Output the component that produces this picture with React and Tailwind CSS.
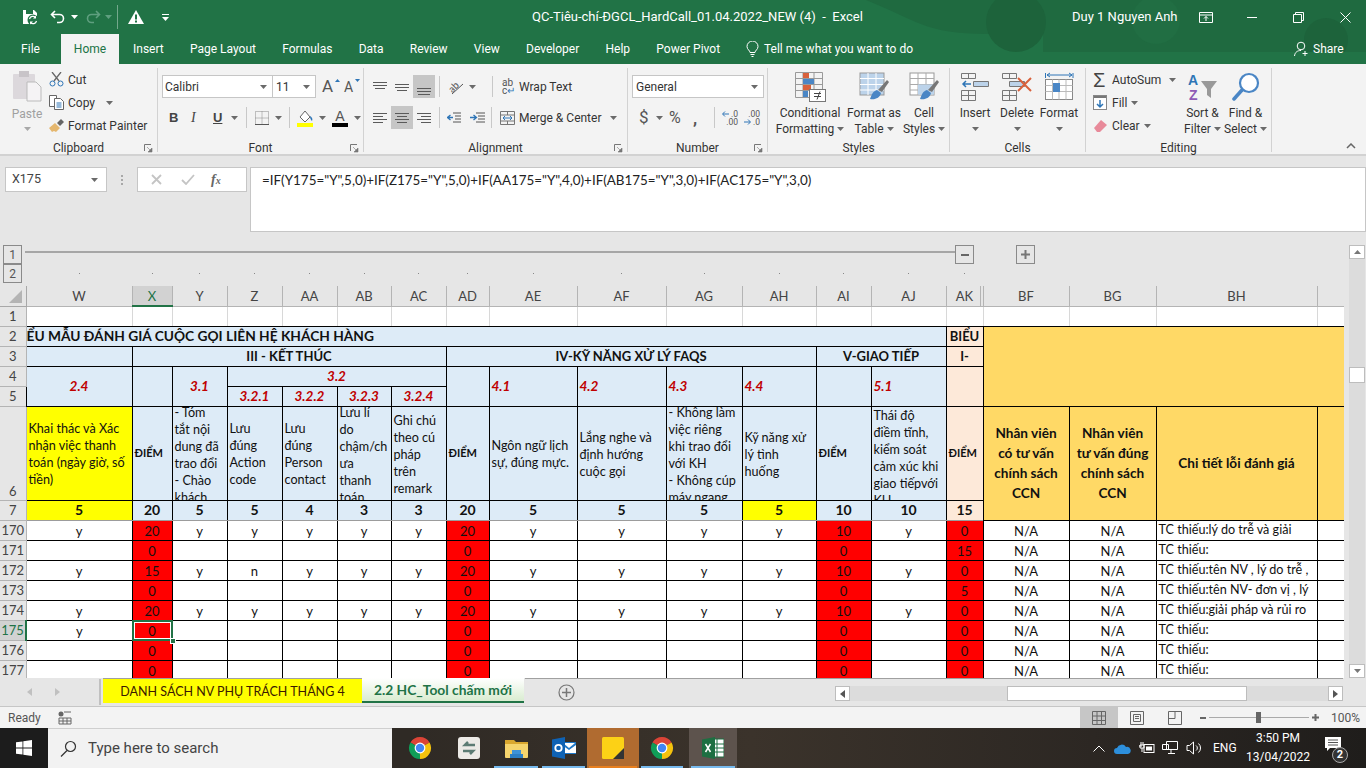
import React from "react";

const COLS = [
  { n: "W", w: "w-[106px]" }, { n: "X", w: "w-[40px]" }, { n: "Y", w: "w-[55px]" }, { n: "Z", w: "w-[55px]" },
  { n: "AA", w: "w-[55px]" }, { n: "AB", w: "w-[54px]" }, { n: "AC", w: "w-[55px]" }, { n: "AD", w: "w-[43px]" },
  { n: "AE", w: "w-[88px]" }, { n: "AF", w: "w-[89px]" }, { n: "AG", w: "w-[76px]" }, { n: "AH", w: "w-[74px]" },
  { n: "AI", w: "w-[55px]" }, { n: "AJ", w: "w-[75px]" }, { n: "AK", w: "w-[37px]" }, { n: "BF", w: "w-[86px]" },
  { n: "BG", w: "w-[87px]" }, { n: "BH", w: "w-[161px]" }, { n: "", w: "w-[27px]" },
];

const ROWS = [
  ["170", "y", "20", "y", "y", "y", "y", "y", "20", "y", "y", "y", "y", "10", "y", "0", "N/A", "N/A", "TC thiếu:lý do trễ và giải"],
  ["171", "", "0", "", "", "", "", "", "0", "", "", "", "", "0", "", "15", "N/A", "N/A", "TC thiếu:"],
  ["172", "y", "15", "y", "n", "y", "y", "y", "20", "y", "y", "y", "y", "10", "y", "0", "N/A", "N/A", "TC thiếu:tên NV , lý do trễ ,"],
  ["173", "", "0", "", "", "", "", "", "0", "", "", "", "", "0", "", "5", "N/A", "N/A", "TC thiếu:tên NV- đơn vị , lý"],
  ["174", "y", "20", "y", "y", "y", "y", "y", "20", "y", "y", "y", "y", "10", "y", "0", "N/A", "N/A", "TC thiếu:giải pháp và rủi ro"],
  ["175", "y", "0", "", "", "", "", "", "0", "", "", "", "", "0", "", "0", "N/A", "N/A", "TC thiếu:"],
  ["176", "", "0", "", "", "", "", "", "0", "", "", "", "", "0", "", "0", "N/A", "N/A", "TC thiếu:"],
  ["177", "", "0", "", "", "", "", "", "0", "", "", "", "", "0", "", "0", "N/A", "N/A", "TC thiếu:"],
];

const Caret = ({ className = "", color = "#6a6a6a" }) => (
  <svg width="7" height="4" viewBox="0 0 7 4" className={"shrink-0 " + className}><path d="M0 0h7L3.5 4z" fill={color} /></svg>
);

const Lines = ({ d, w = 16, h = 16, color = "#5a5a5a" }) => (
  <svg width={w} height={h} viewBox={`0 0 ${w} ${h}`} className="shrink-0">
    {d.map(([a, b, y], i) => <rect key={i} x={a} y={y} width={b - a} height="1" fill={color} />)}
  </svg>
);

const Launcher = () => (
  <svg width="9" height="9" viewBox="0 0 9 9" className="absolute right-[4px] top-[4px]">
    <path d="M.5 7V.5H7" fill="none" stroke="#777" /><path d="M3 3l4 4M8 4v4H4z" fill="#777" stroke="#777" strokeWidth=".6" />
  </svg>
);

function Group({ className, label, launcher, children }) {
  return (
    <div className={"h-[84px] shrink-0 border-r border-[#d2d2d2] " + className}>
      <div className="h-[72px] flex flex-col">{children}</div>
      <div className="relative h-[16px] leading-[16px] text-center text-[#333]">
        {label}
        {launcher && <Launcher />}
      </div>
    </div>
  );
}

const BigBtn = ({ w, icon, l1, l2, caretOnly }) => (
  <div className={"flex flex-col items-center shrink-0 " + w}>
    <div className="h-[38px] flex items-center justify-center">{icon}</div>
    <div className="leading-[16px] mt-[-1px] whitespace-nowrap">{l1}</div>
    {caretOnly ? <Caret className="mt-[6px]" /> : (
      <div className="leading-[16px] flex items-center gap-[3px] whitespace-nowrap">{l2}<Caret /></div>
    )}
  </div>
);

const Sep = ({ className = "" }) => <div className={"w-px h-[21px] bg-[#c8c8c8] shrink-0 " + className} />;

const Chrome = () => (
  <svg width="24" height="24" viewBox="0 0 24 24">
    <path d="M12 12L2.47 6.5A11 11 0 0 1 21.53 6.5Z" fill="#db4437" />
    <path d="M12 12L21.53 6.5A11 11 0 0 1 12 23Z" fill="#f4c20d" />
    <path d="M12 12L12 23A11 11 0 0 1 2.47 6.5Z" fill="#0f9d58" />
    <circle cx="12" cy="12" r="5.4" fill="#fff" /><circle cx="12" cy="12" r="4.2" fill="#4285f4" />
  </svg>
);

const Slot = ({ className = "", bar = "", children }) => (
  <div className={"relative h-full flex items-center justify-center shrink-0 " + className}>
    {children}
    {bar && <div className={"absolute bottom-0 left-[2px] right-[2px] h-[2px] " + bar} />}
  </div>
);

function TitleBar() {
  return (
    <div className="h-[34px] flex items-center text-white shrink-0">
      <svg width="18" height="18" viewBox="0 0 18 18" className="ml-[21px]">
        <path d="M2 2h11l3 3v11H2z" fill="#fff" /><rect x="5" y="2" width="7" height="4" fill="#217346" /><circle cx="12" cy="12" r="5.5" fill="#217346" />
        <path d="M8.5 11a3.5 3.5 0 0 1 6-1.5M15.5 13a3.5 3.5 0 0 1-6 1.5" fill="none" stroke="#fff" strokeWidth="1.2" />
        <path d="M15 7.5v3h-3zM9 16.500v-3h3z" fill="#fff" />
      </svg>
      <svg width="16" height="14" viewBox="0 0 16 14" className="ml-[11px]"><path d="M5 1L1.500 4.500 5 8M2 4.500h7.500a4 4 0 0 1 0 8H7" fill="none" stroke="#fff" strokeWidth="1.6" /></svg>
      <Caret color="#fff" className="ml-[5px]" />
      <svg width="16" height="14" viewBox="0 0 16 14" className="ml-[7px]"><path d="M11 1l3.500 3.500L11 8M14 4.500H6.500a4 4 0 0 0 0 8H9" fill="none" stroke="#5f9f7f" strokeWidth="1.6" /></svg>
      <Caret color="#5f9f7f" className="ml-[4px]" />
      <div className="w-px h-[24px] bg-[#74a88c] ml-[5px]" />
      <svg width="16" height="14" viewBox="0 0 16 14" className="ml-[10px]"><path d="M8 0l8 14H0z" fill="#fff" /><rect x="7" y="4.500" width="2" height="5" fill="#217346" /><rect x="7" y="10.500" width="2" height="2" fill="#217346" /></svg>
      <svg width="7" height="7" viewBox="0 0 7 7" className="ml-[18px]"><rect y="0" width="7" height="1" fill="#fff" /><path d="M0 3h7L3.500 7z" fill="#fff" /></svg>
      <div className="ml-[363px] w-[310px] text-[13px] whitespace-pre">QC-Tiêu-chí-ĐGCL_HardCall_01.04.2022_NEW (4)  -  Excel</div>
      <div className="ml-[230px] w-[111px] text-[13px] whitespace-nowrap z-10">Duy 1 Nguyen Anh</div>
      <svg width="14" height="11" viewBox="0 0 14 11" className="ml-[16px] z-10"><path d="M.5.500h13v10H.5zM.5 3h13M7 9V4.500M5 6.500l2-2 2 2" fill="none" stroke="#fff" /></svg>
      <div className="w-[10px] h-px bg-white ml-[34px] z-10" />
      <svg width="11" height="11" viewBox="0 0 11 11" className="ml-[36px] z-10"><path d="M.5 2.500h8v8h-8zM2.500 2.500v-2h8v8h-2" fill="none" stroke="#fff" /></svg>
      <svg width="11" height="11" viewBox="0 0 11 11" className="ml-[36px] z-10"><path d="M.5.500l10 10M10.500.500l-10 10" stroke="#fff" /></svg>
    </div>
  );
}

function TabRow() {
  const tabs = ["Insert", "Page Layout", "Formulas", "Data", "Review", "View", "Developer", "Help", "Power Pivot"];
  return (
    <div className="h-[30px] flex items-end text-white text-[12px] shrink-0">
      <div className="w-[61px] h-[30px] leading-[30px] text-center">File</div>
      <div className="w-[58px] h-[30px] leading-[30px] text-center bg-[#f3f3f3] text-[#217346]">Home</div>
      <div className="flex gap-[26.250px] ml-[14px] h-[30px] leading-[30px] w-[587px]">
        {tabs.map((t) => <div key={t} className="whitespace-nowrap">{t}</div>)}
      </div>
      <div className="h-[30px] flex items-center ml-[26px]">
        <svg width="13" height="16" viewBox="0 0 13 16"><path d="M4 11.500c0-2-3-3-3-6a5.500 5.500 0 0 1 11 0c0 3-3 4-3 6zM4.500 13.500h4M5.500 15.500h2" fill="none" stroke="#fff" /></svg>
        <span className="ml-[5px] w-[150px] whitespace-nowrap">Tell me what you want to do</span>
      </div>
      <div className="h-[30px] flex items-center ml-[380px] z-10 whitespace-nowrap">
        <svg width="15" height="16" viewBox="0 0 15 16"><circle cx="7" cy="5" r="3.800" fill="none" stroke="#fff" /><path d="M.5 15c.5-4 3-5.500 6.500-5.500M11 10v5M8.500 12.500h5" fill="none" stroke="#fff" /></svg>
        <span className="ml-[4px]">Share</span>
      </div>
    </div>
  );
}

const CondFormat = () => (
  <svg width="31" height="30" viewBox="0 0 31 30">
    <path d="M.5.500h27v25H.5zM8 .5v25M19 .5v25M.5 6.500h27M.5 12.500h27M.5 18.500h27" fill="none" stroke="#999" />
    <rect x="8" y="1" width="6" height="5" fill="#d8613c" /><rect x="8" y="7" width="11" height="5" fill="#4a86c5" /><rect x="8" y="13" width="8" height="5" fill="#d8613c" /><rect x="8" y="19" width="5" height="6" fill="#4a86c5" />
    <rect x="14.500" y="17.500" width="16" height="12" fill="#fff" stroke="#777" /><path d="M19 21.500h7M19 24.500h7M25 19.500l-3 8" stroke="#444" fill="none" />
  </svg>
);
const FormatTable = ({ cell }) => (
  <svg width="31" height="30" viewBox="0 0 31 30">
    <rect x="1" y="1" width="24" height="22" fill={cell ? "#fff" : "#bcd3ea"} stroke="#999" />
    <path d="M1 6.500h24M1 12.500h24M1 18h24M9 1v22M17 1v22" stroke={cell ? "#aaa" : "#fff"} fill="none" />
    {cell && <rect x="9" y="12.500" width="16" height="10" fill="#bcd3ea" />}
    <path d="M28 8l2 2-7 10-4-2z" fill="#777" /><path d="M18 18c-4 1-5 4-7 9 5 1 10-1 11-6z" fill="#4a86c5" />
  </svg>
);
const InsertIco = () => (
  <svg width="28" height="28" viewBox="0 0 28 28">
    <path d="M.5.500h14v5H.5zM7.500.5v5M.5 17.500h14v10H.5zM.5 22.500h14M7.500 17.500v10M12.500 8.500h15v5h-15zM20 8.500v5" fill="none" stroke="#777" />
    <rect x="13" y="9" width="14" height="4" fill="#bcd3ea" /><path d="M10 11H2M5 8l-3 3 3 3" fill="none" stroke="#2e75b6" strokeWidth="1.500" />
  </svg>
);
const DeleteIco = () => (
  <svg width="31" height="28" viewBox="0 0 31 28">
    <path d="M.5.500h14v5H.5zM7.500.5v5M.5 17.500h14v10H.5zM.5 22.500h14M7.500 17.500v10M7.500 8.500h15v5h-15z" fill="none" stroke="#777" />
    <rect x="8" y="9" width="14" height="4" fill="#bcd3ea" /><path d="M16 5l13 13M29 5L16 18" stroke="#d8613c" strokeWidth="2" />
  </svg>
);
const FormatIco = () => (
  <svg width="29" height="30" viewBox="0 0 29 30">
    <path d="M.5 1v5M28 1v5M2 3h25M2 3l3-2M2 3l3 2M27 3l-3-2M27 3l-3 2" fill="none" stroke="#2e75b6" />
    <rect x=".5" y="7.500" width="27" height="20" fill="#fff" stroke="#888" /><path d="M.5 13.500h27M.5 19.500h27M7.500 7.500v20M14 7.500v20M21 7.500v20" stroke="#bbb" />
    <rect x="8" y="11" width="7" height="9" fill="#4a86c5" />
  </svg>
);

function Ribbon() {
  return (
    <div className="h-[92px] bg-[#f3f3f3] border-b-2 border-[#d2d2d2] pt-[4px] flex text-[12px] text-[#333] shrink-0">
      <Group className="w-[158px]" label="Clipboard" launcher>
        <div className="flex h-full">
          <div className="ml-[11px] w-[32px] flex flex-col items-center">
            <svg width="30" height="31" viewBox="0 0 30 31" className="mt-[3px]">
              <rect x="1" y="3" width="22" height="25" rx="1" fill="#dcd8dc" /><rect x="7" y="0" width="10" height="6" fill="#c8c4c8" />
              <path d="M15 11h9l5 5v14H15z" fill="#f5f3f5" stroke="#bbb" />
            </svg>
            <div className="mt-[4px] text-[#a0a0a0] leading-[16px]">Paste</div>
            <Caret className="mt-[5px]" color="#a8a8a8" />
          </div>
          <div className="ml-[6px] flex flex-col">
            <div className="h-[23px] flex items-center">
              <svg width="15" height="15" viewBox="0 0 15 15"><path d="M3 0l7 9M12 0L5 9" stroke="#666" strokeWidth="1.300" /><circle cx="3.500" cy="11.500" r="2.500" fill="none" stroke="#2e75b6" /><circle cx="11.500" cy="11.500" r="2.500" fill="none" stroke="#2e75b6" /></svg>
              <span className="ml-[4px]">Cut</span>
            </div>
            <div className="h-[23px] flex items-center">
              <svg width="15" height="15" viewBox="0 0 15 15"><path d="M.5.500h7v11h-7z" fill="#fff" stroke="#666" /><path d="M5.500 3.500h6l3 3v8h-9z" fill="#fff" stroke="#666" /><path d="M7.500 8h5M7.500 10h5M7.500 12h5" stroke="#2e75b6" /></svg>
              <span className="ml-[4px]">Copy</span><Caret className="ml-[11px]" />
            </div>
            <div className="h-[23px] flex items-center">
              <svg width="16" height="15" viewBox="0 0 16 15"><path d="M0 10l6-5 5 5-4 4-2-1-2 1z" fill="#e5b76e" /><path d="M8 5l4-4 3 3-4 4z" fill="#666" /></svg>
              <span className="ml-[3px] whitespace-nowrap">Format Painter</span>
            </div>
          </div>
        </div>
      </Group>

      <Group className="w-[206px]" label="Font" launcher>
        <div className="flex mt-[7px] ml-[4px] h-[23px]">
          <div className="w-[111px] bg-white border border-[#c6c6c6] flex items-center justify-between pl-[2px] pr-[5px]"><span>Calibri</span><Caret /></div>
          <div className="w-[43px] bg-white border border-l-0 border-[#c6c6c6] flex items-center justify-between pl-[3px] pr-[5px]"><span>11</span><Caret /></div>
          <div className="ml-[6px] text-[17px] leading-[23px] text-[#555] relative w-[16px]">A<svg width="5" height="3" className="absolute right-[-2px] top-[4px]"><path d="M0 3h5L2.500 0z" fill="#2e75b6" /></svg></div>
          <div className="ml-[6px] text-[14px] leading-[24px] text-[#555] relative w-[14px]">A<svg width="5" height="3" className="absolute right-[-2px] top-[4px]"><path d="M0 0h5L2.500 3z" fill="#2e75b6" /></svg></div>
        </div>
        <div className="flex items-center mt-[8px] h-[23px] font-[Liberation_Serif,serif]">
          <span className="ml-[11px] w-[12px] font-bold text-[13px] font-[Liberation_Sans,sans-serif] text-[#444]">B</span>
          <span className="ml-[10px] w-[12px] italic text-[14px] text-[#444]">I</span>
          <span className="ml-[10px] w-[11px] underline font-bold text-[13px] font-[Liberation_Sans,sans-serif] text-[#444]">U</span>
          <Caret className="ml-[7px]" />
          <Sep className="ml-[8px]" />
          <svg width="14" height="14" viewBox="0 0 14 14" className="ml-[8px]"><path d="M.5.500h13v13H.5zM7 .5v13M.5 7h13" fill="none" stroke="#888" strokeDasharray="1 1" /><path d="M0 13.500h14" stroke="#555" /></svg>
          <Caret className="ml-[6px]" />
          <Sep className="ml-[7px]" />
          <svg width="17" height="18" viewBox="0 0 17 18" className="ml-[7px]"><path d="M3 8l5-6 5 6-5 5z" fill="#fff" stroke="#666" /><path d="M13 7c2 1 3 3 2 5-1-1-2-2-2-5z" fill="#2e75b6" /><rect y="14" width="16" height="4" fill="#ffff00" /></svg>
          <Caret className="ml-[5px]" />
          <div className="ml-[6px] w-[16px] h-[18px] flex flex-col items-center justify-end">
            <span className="text-[14px] leading-[13px] font-[Liberation_Sans,sans-serif] text-[#555]">A</span>
            <div className="w-[16px] h-[4px] bg-black" />
          </div>
          <Caret className="ml-[6px]" />
        </div>
      </Group>

      <Group className="w-[264px]" label="Alignment" launcher>
        <div className="flex items-center mt-[7px] h-[23px] pl-[9px]">
          <Lines d={[[0, 14, 3], [0, 14, 6], [2, 12, 9]]} />
          <div className="ml-[6px]"><Lines d={[[0, 14, 5], [0, 14, 8], [2, 12, 11]]} /></div>
          <div className="ml-[2px] w-[22px] h-[23px] bg-[#c6c6c6] flex items-center justify-center"><Lines d={[[1, 15, 9], [1, 15, 12], [2, 14, 15]]} /></div>
          <Sep className="ml-[4px]" />
          <svg width="17" height="17" viewBox="0 0 17 17" className="ml-[7px]"><text x="1" y="13" fontSize="10" fill="#555" transform="rotate(-45 6 9)" fontFamily="Lato">ab</text><path d="M5 16L16 6" stroke="#555" /></svg>
          <Caret className="ml-[5px]" />
          <Sep className="ml-[16px]" />
          <span className="ml-[9px] text-[10px] leading-[8px] text-[#555] w-[14px]">ab<br />c<span className="text-[#2e75b6]">↵</span></span>
          <span className="ml-[3px]">Wrap Text</span>
        </div>
        <div className="flex items-center mt-[8px] h-[23px] pl-[9px]">
          <Lines d={[[0, 14, 3], [0, 10, 6], [0, 14, 9], [0, 10, 12]]} />
          <div className="ml-[2px] w-[22px] h-[23px] bg-[#c6c6c6] flex items-center justify-center"><Lines d={[[1, 15, 3], [3, 13, 6], [1, 15, 9], [3, 13, 12]]} /></div>
          <div className="ml-[4px]"><Lines d={[[0, 14, 3], [4, 14, 6], [0, 14, 9], [4, 14, 12]]} /></div>
          <Sep className="ml-[6px]" />
          <svg width="14" height="14" viewBox="0 0 14 14" className="ml-[7px]"><path d="M6 2h8M8 5h6M8 8h6M6 11h8" stroke="#555" /><path d="M6 6.500H1M3.500 4l-3 2.500 3 2.500" fill="none" stroke="#2e75b6" strokeWidth="1.300" /></svg>
          <svg width="16" height="14" viewBox="0 0 16 14" className="ml-[8px]"><path d="M7 2h9M9 5h7M9 8h7M7 11h9" stroke="#555" /><path d="M1 6.500h6M4.500 4l3 2.500-3 2.500" fill="none" stroke="#2e75b6" strokeWidth="1.300" /></svg>
          <Sep className="ml-[6px]" />
          <svg width="15" height="14" viewBox="0 0 15 14" className="ml-[8px]"><path d="M.5.500h14v13H.5zM.5 4h14M.5 10h14M7.500.5V4M7.500 10v3.500" fill="none" stroke="#777" /><path d="M3 7h9M5 5L3 7l2 2M10 5l2 2-2 2" fill="none" stroke="#2e75b6" /></svg>
          <span className="ml-[4px] whitespace-nowrap">Merge &amp; Center</span>
          <Caret className="ml-[9px]" />
        </div>
      </Group>

      <Group className="w-[140px]" label="Number" launcher>
        <div className="mt-[7px] ml-[4px] w-[132px] h-[23px] bg-white border border-[#c6c6c6] flex items-center justify-between pl-[3px] pr-[5px]"><span>General</span><Caret /></div>
        <div className="flex items-center mt-[8px] h-[23px] text-[#555]">
          <span className="ml-[11px] text-[17px] w-[10px]">$</span>
          <Caret className="ml-[7px]" />
          <span className="ml-[6px] text-[16px] w-[15px]">%</span>
          <span className="ml-[9px] text-[17px] font-bold w-[5px] leading-[18px]">,</span>
          <Sep className="ml-[16px]" />
          <div className="ml-[7px] w-[16px] text-[8.500px] leading-[8px]">
            <div className="flex items-center justify-between">
              <svg width="7" height="6" viewBox="0 0 7 6"><path d="M7 3H1M3 .5L.5 3 3 5.500" fill="none" stroke="#2e75b6" /></svg>
              <span>.0</span>
            </div>
            <div className="text-right">.00</div>
          </div>
          <div className="ml-[6px] w-[16px] text-[8.500px] leading-[8px]">
            <div className="text-right">.00</div>
            <div className="flex items-center justify-between">
              <svg width="7" height="6" viewBox="0 0 7 6"><path d="M0 3h6M4 .5L6.500 3 4 5.500" fill="none" stroke="#2e75b6" /></svg>
              <span>.0</span>
            </div>
          </div>
        </div>
      </Group>

      <Group className="w-[182px]" label="Styles">
        <div className="flex pl-[9px]">
          <BigBtn w="w-[66px]" icon={<CondFormat />} l1="Conditional" l2="Formatting" />
          <BigBtn w="w-[62px]" icon={<FormatTable />} l1="Format as" l2="Table" />
          <BigBtn w="w-[38px]" icon={<FormatTable cell />} l1="Cell" l2="Styles" />
        </div>
      </Group>

      <Group className="w-[136px]" label="Cells">
        <div className="flex pl-[4px]">
          <BigBtn w="w-[42px]" icon={<InsertIco />} l1="Insert" caretOnly />
          <BigBtn w="w-[42px]" icon={<DeleteIco />} l1="Delete" caretOnly />
          <BigBtn w="w-[42px]" icon={<FormatIco />} l1="Format" caretOnly />
        </div>
      </Group>

      <Group className="w-[186px]" label="Editing">
        <div className="flex">
          <div className="flex flex-col ml-[7px] w-[88px]">
            <div className="h-[23px] flex items-center">
              <span className="w-[15px] text-[20px] leading-[20px] text-[#444] font-[Liberation_Sans,sans-serif]">Σ</span>
              <span className="ml-[4px]">AutoSum</span><Caret className="ml-[8px]" />
            </div>
            <div className="h-[23px] flex items-center">
              <svg width="15" height="15" viewBox="0 0 15 15"><rect x=".5" y=".5" width="13" height="14" fill="#fff" stroke="#888" /><rect x="1" y="1" width="12" height="2" fill="#777" /><path d="M7 5v7M4 9l3 3 3-3" fill="none" stroke="#2e75b6" strokeWidth="1.500" /></svg>
              <span className="ml-[4px]">Fill</span><Caret className="ml-[4px]" />
            </div>
            <div className="h-[23px] flex items-center">
              <svg width="15" height="14" viewBox="0 0 15 14"><path d="M1 9l7-8 6 5-7 7H4z" fill="#e88a9a" /></svg>
              <span className="ml-[4px]">Clear</span><Caret className="ml-[4px]" />
            </div>
          </div>
          <BigBtn w="w-[43px]" icon={
            <svg width="30" height="30" viewBox="0 0 30 30">
              <text x="0" y="13" fontSize="14" fontWeight="bold" fill="#2e75b6" fontFamily="Liberation Sans">A</text>
              <text x="1" y="28" fontSize="14" fontWeight="bold" fill="#8e5bb5" fontFamily="Liberation Sans">Z</text>
              <path d="M13 9h16l-6 8v9l-4-3v-6z" fill="#999" />
            </svg>
          } l1="Sort &amp;" l2="Filter" />
          <BigBtn w="w-[43px]" icon={
            <svg width="28" height="30" viewBox="0 0 28 30"><circle cx="17" cy="11" r="9" fill="#fff" stroke="#4a86c5" strokeWidth="2.200" /><path d="M10 18l-8 9" stroke="#4a86c5" strokeWidth="3.500" strokeLinecap="round" /></svg>
          } l1="Find &amp;" l2="Select" />
        </div>
      </Group>
      <div className="flex-1 flex justify-end items-end pb-[3px] pr-[10px] h-[84px]">
        <svg width="10" height="6" viewBox="0 0 10 6"><path d="M1 5l4-4 4 4" fill="none" stroke="#666" strokeWidth="1.500" /></svg>
      </div>
    </div>
  );
}

function FormulaBar() {
  return (
    <div className="h-[84px] bg-[#e6e6e6] flex items-start pt-[11px] text-[12.5px] shrink-0">
      <div className="ml-[5px] w-[102px] h-[25px] bg-white border border-[#c6c6c6] flex items-center justify-between pl-[6px] pr-[8px] text-[#444]">
        <span>X175</span><Caret />
      </div>
      <div className="w-[30px] h-[25px] flex items-center justify-center">
        <svg width="2" height="10" viewBox="0 0 2 10"><path d="M0 0h2v2H0zM0 4h2v2H0zM0 8h2v2H0z" fill="#a8a8a8" /></svg>
      </div>
      <div className="w-[110px] h-[25px] bg-white border border-[#c6c6c6] flex items-center pl-[13px]">
        <svg width="11" height="11" viewBox="0 0 11 11"><path d="M1 1l9 9M10 1l-9 9" stroke="#c4c4c4" strokeWidth="1.800" /></svg>
        <svg width="14" height="11" viewBox="0 0 14 11" className="ml-[19px]"><path d="M1 6l4 4 8-9" fill="none" stroke="#c4c4c4" strokeWidth="1.800" /></svg>
        <span className="ml-[16px] font-[Liberation_Serif,serif] italic font-bold text-[14px] text-[#666]">f<span className="text-[10px]">x</span></span>
      </div>
      <div className="ml-[3px] flex-1 h-[65px] bg-white border border-[#c6c6c6] pl-[11px] pt-[3px] font-[Lato,sans-serif] text-[13.400px] text-[#222] leading-[18px]">
        {'=IF(Y175="Y",5,0)+IF(Z175="Y",5,0)+IF(AA175="Y",4,0)+IF(AB175="Y",3,0)+IF(AC175="Y",3,0)'}
      </div>
    </div>
  );
}

const OutBtn = ({ children, className = "" }) => (
  <div className={"w-[19px] h-[19px] border border-[#8a8a8a] flex items-center justify-center text-[12px] text-[#555] shrink-0 " + className}>{children}</div>
);

function Outline() {
  return (
    <div className="h-[46px] flex pt-[5px] text-[12.5px]">
      <div className="ml-[3px] w-[22px] flex flex-col shrink-0">
        <OutBtn>1</OutBtn><OutBtn>2</OutBtn>
      </div>
      <div className="flex-1">
        <div className="h-[19px] flex items-start">
          <div className="w-[930px] h-[2px] mt-[6px] bg-[#a6a6a6]" />
          <OutBtn><div className="w-[8px] h-[2px] bg-[#666]" /></OutBtn>
          <OutBtn className="ml-[42px]">
            <svg width="9" height="9" viewBox="0 0 9 9"><path d="M0 3.500h9v2H0zM3.500 0h2v9h-2z" fill="#777" /></svg>
          </OutBtn>
        </div>
        <div className="flex h-[19px] items-center">
          <div className="w-px" />
          {COLS.slice(0, 15).map((c) => (
            <div key={c.n} className={"flex justify-center " + c.w}><div className="w-[1px] h-[1px] bg-[#888]" /></div>
          ))}
        </div>
      </div>
    </div>
  );
}

const b = "border border-black";
const blue = "bg-[#ddebf7]";
const sec = "text-[13px] font-bold text-center " + b + " " + blue;
const num = "font-bold italic text-[#c00000] text-[13.500px] " + b + " " + blue;
const RowHead = ({ children, active }) => (
  <td className={"bg-[#e6e6e6] border-b border-r border-[#b4b4b4] text-center text-[13px] " + (active ? "!bg-[#d2d2d2] text-[#217346] !border-r-2 !border-r-[#217346]" : "text-[#444]")}>{children}</td>
);

const Crit = ({ children, className = "", pt = "pt-[2px]" }) => (
  <td className={b + " p-0 " + className}>
    <div className={"h-[93px] overflow-hidden flex items-center px-[2px] text-[12.600px] leading-[17px] whitespace-pre " + pt}><div>{children}</div></div>
  </td>
);
const Diem = ({ className = blue }) => (
  <td className={b + " text-[11px] font-bold pl-[2px] " + className}>ĐIỂM</td>
);
const Gold = ({ children }) => (
  <td rowSpan={2} className={b + " bg-[#ffd966] text-center font-bold text-[13.600px] leading-[20px] whitespace-pre-line"}>{children}</td>
);

function Sheet() {
  return (
    <div className="h-[392px] overflow-hidden font-[Lato,'Noto_Sans',sans-serif]">
      <table className="table-fixed w-[1344px] text-[13px] leading-[18px] text-[#111] [&_td]:py-0">
        <colgroup>
          <col className="w-[26px]" />
          {COLS.map((c) => <col key={c.n} className={c.w} />)}
        </colgroup>
        <tbody>
          <tr className="h-[20px]">
            <td className="bg-[#e6e6e6] border-b border-r border-[#a8a8a8] p-0">
              <svg width="24" height="19" viewBox="0 0 24 19"><path d="M22 4v13H9z" fill="#b4b4b4" /></svg>
            </td>
            {COLS.map((c) => (
              <td key={c.n} className={"relative bg-[#e6e6e6] border-r border-b border-[#b4b4b4] text-center p-0 text-[13px] " + (c.n === "X" ? "!bg-[#d2d2d2] text-[#217346] !border-b-2 !border-b-[#217346]" : "text-[#444]")}>
                {c.n}
                {c.n === "AK" && <span className="absolute right-[2px] top-0 bottom-0 w-px bg-[#b4b4b4]" />}
              </td>
            ))}
          </tr>
          <tr className="h-[20px]">
            <RowHead>1</RowHead>
            {COLS.map((c) => <td key={c.n} className="border-r border-r-[#d8d8d8] border-b border-b-black bg-white" />)}
          </tr>
          <tr className="h-[20px]">
            <RowHead>2</RowHead>
            <td colSpan={14} className={b + " " + blue + " font-bold text-[13.750px] whitespace-nowrap"}>ỂU MẪU ĐÁNH GIÁ CUỘC GỌI LIÊN HỆ KHÁCH HÀNG</td>
            <td className={"bg-[#fde9d9] text-center p-0 " + b + " font-bold text-[13px]"}>BIỂU</td>
            <td colSpan={4} rowSpan={4} className={b + " bg-[#ffd966]"} />
          </tr>
          <tr className="h-[20px]">
            <RowHead>3</RowHead>
            <td className={b + " " + blue} />
            <td colSpan={6} className={sec}>III - KẾT THÚC</td>
            <td colSpan={5} className={sec}>IV-KỸ NĂNG XỬ LÝ FAQS</td>
            <td colSpan={2} className={sec}>V-GIAO TIẾP</td>
            <td className={"bg-[#fde9d9] text-center font-bold " + b}>I-</td>
          </tr>
          <tr className="h-[20px]">
            <RowHead>4</RowHead>
            <td rowSpan={2} className={num + " text-center"}>2.4</td>
            <td rowSpan={2} className={b + " " + blue} />
            <td rowSpan={2} className={num + " text-center"}>3.1</td>
            <td colSpan={4} className={num + " text-center"}>3.2</td>
            <td rowSpan={2} className={b + " " + blue} />
            <td rowSpan={2} className={num + " pl-[2px]"}>4.1</td>
            <td rowSpan={2} className={num + " pl-[2px]"}>4.2</td>
            <td rowSpan={2} className={num + " pl-[2px]"}>4.3</td>
            <td rowSpan={2} className={num + " pl-[2px]"}>4.4</td>
            <td rowSpan={2} className={b + " " + blue} />
            <td rowSpan={2} className={num + " pl-[2px]"}>5.1</td>
            <td rowSpan={2} className={b + " bg-[#fde9d9]"} />
          </tr>
          <tr className="h-[20px]">
            <RowHead>5</RowHead>
            <td className={num + " text-center"}>3.2.1</td>
            <td className={num + " text-center"}>3.2.2</td>
            <td className={num + " text-center"}>3.2.3</td>
            <td className={num + " text-center"}>3.2.4</td>
          </tr>
          <tr className="h-[94px]">
            <td className="bg-[#e6e6e6] border-b border-r border-[#b4b4b4] text-center align-bottom text-[#444]">6</td>
            <Crit className="bg-[#ffff00]">{"Khai thác và Xác\nnhận việc thanh\ntoán (ngày giờ, số\ntiền)"}</Crit>
            <Diem />
            <Crit className={blue} pt="pt-[4px]">{"- Tóm\ntắt nội\ndung đã\ntrao đổi\n- Chào\nkhách"}</Crit>
            <Crit className={blue}>{"Lưu\nđúng\nAction\ncode"}</Crit>
            <Crit className={blue}>{"Lưu\nđúng\nPerson\ncontact"}</Crit>
            <Crit className={blue} pt="pt-[4px]">{"Lưu lí\ndo\nchậm/ch\nưa\nthanh\ntoán"}</Crit>
            <Crit className={blue}>{"Ghi chú\ntheo cú\npháp\ntrên\nremark"}</Crit>
            <Diem />
            <Crit className={blue}>{"Ngôn ngữ lịch\nsự, đúng mực."}</Crit>
            <Crit className={blue}>{"Lắng nghe và\nđịnh hướng\ncuộc gọi"}</Crit>
            <Crit className={blue} pt="pt-[4px]">{"- Không làm\nviệc riêng\nkhi trao đổi\nvới KH\n- Không cúp\nmáy ngang"}</Crit>
            <Crit className={blue}>{"Kỹ năng xử\nlý tình\nhuống"}</Crit>
            <Diem />
            <Crit className={blue} pt="pt-[10px]">{"Thái độ\nđiềm tĩnh,\nkiểm soát\ncảm xúc khi\ngiao tiếpvới\nKH"}</Crit>
            <Diem className="bg-[#fde9d9]" />
            <Gold>{"Nhân viên\ncó tư vấn\nchính sách\nCCN"}</Gold>
            <Gold>{"Nhân viên\ntư vấn đúng\nchính sách\nCCN"}</Gold>
            <Gold>Chi tiết lỗi đánh giá</Gold>
            <Gold />
          </tr>
          <tr className="h-[20px]">
            <td className="bg-[#e6e6e6] border-b border-r border-[#b4b4b4] text-center text-[#444]">7</td>
            {["5", "20", "5", "5", "4", "3", "3", "20", "5", "5", "5", "5", "10", "10", "15"].map((v, i) => (
              <td key={i} className={"border-x border-t border-black border-b border-b-[#9c9c9c] text-center font-bold text-[14px] " + (i === 0 || i === 11 ? "bg-[#ffff00]" : i === 14 ? "bg-[#fde9d9]" : blue)}>{v}</td>
            ))}
          </tr>
          {ROWS.map((r) => (
            <tr key={r[0]} className="h-[20px]">
              <RowHead active={r[0] === "175"}>{r[0]}</RowHead>
              {r.slice(1).map((v, i) => {
                const red = i === 1 || i === 7 || i === 12 || i === 14;
                const sel = r[0] === "175" && i === 1;
                return (
                  <td key={i} className={"relative p-0 border border-black whitespace-nowrap " + (sel ? "z-10 " : "overflow-hidden ") + (red ? "bg-[#ff0000] " : "bg-white ") + (i === 17 ? "text-left pl-[2px] align-top text-[12.600px]" : "text-center align-bottom")}>
                    {v}
                    {sel && (
                      <div className="absolute -inset-px border-2 border-[#217346]">
                        <div className="h-full border border-white" />
                        <div className="absolute right-[-5px] bottom-[-5px] w-[6px] h-[6px] bg-[#217346] border border-white" />
                      </div>
                    )}
                  </td>
                );
              })}
              <td className="border border-black border-r-[#a6a6a6] bg-white" />
            </tr>
          ))}
        </tbody>
      </table>
    </div>
  );
}

function VScroll() {
  return (
    <div className="w-[18px] ml-[4px] pt-[5px] shrink-0 flex flex-col items-center bg-[#e6e6e6] h-[438px]">
      <div className="w-[16px] h-[14px] bg-white border border-[#bdbdbd] flex items-center justify-center"><svg width="7" height="4"><path d="M0 4h7L3.500 0z" fill="#777" /></svg></div>
      <div className="w-[16px] flex-1 bg-[#dcdcdc] flex flex-col">
        <div className="h-[108px]" />
        <div className="h-[16px] bg-white border border-[#bdbdbd]" />
      </div>
      <div className="w-[16px] h-[14px] bg-white border border-[#bdbdbd] flex items-center justify-center"><svg width="7" height="4"><path d="M0 0h7L3.500 4z" fill="#777" /></svg></div>
    </div>
  );
}

function SheetTabs() {
  return (
    <div className="h-[29px] bg-[#e6e6e6] border-b border-[#c6c6c6] flex text-[12.500px] font-[Lato,sans-serif] shrink-0">
      <div className="w-[101px] h-[26px] flex items-center border-r-2 border-[#c0c0c0] mt-[1px]">
        <svg width="5" height="8" className="ml-[27px]"><path d="M5 0v8L0 4z" fill="#c0c0c0" /></svg>
        <svg width="5" height="8" className="ml-[23px]"><path d="M0 0v8l5-4z" fill="#c0c0c0" /></svg>
      </div>
      <div className="ml-[2px] w-[259px] h-[25px] bg-[#ffff00] text-center leading-[25px] text-[#3c1a00] border-t border-[#a0a0a0]">DANH SÁCH NV PHỤ TRÁCH THÁNG 4</div>
      <div className="w-[162px] h-[25px] bg-[linear-gradient(180deg,#ffffff,#d9ecd0)] text-center leading-[24px] text-[13.800px] text-[#217346] font-bold border-b-2 border-[#217346]">2.2 HC_Tool chấm mới</div>
      <div className="w-[310px] flex items-start pl-[33px] pt-[5px] border-t border-[#a0a0a0] ml-[1px]">
        <svg width="17" height="17" viewBox="0 0 17 17"><circle cx="8.500" cy="8.500" r="7.500" fill="none" stroke="#777" strokeWidth="1.200" /><path d="M8.500 4v9M4 8.500h9" stroke="#777" strokeWidth="1.500" /></svg>
      </div>
      <div className="flex items-start pt-[7px] w-[508px] border-t border-[#a0a0a0]">
        <div className="w-[15px] h-[15px] bg-white border border-[#bdbdbd] flex items-center justify-center"><svg width="5" height="8"><path d="M5 0v8L0 4z" fill="#555" /></svg></div>
        <div className="flex-1 h-[15px] bg-[#dcdcdc] pl-[157px]"><div className="w-[240px] h-[15px] bg-white border border-[#bdbdbd]" /></div>
        <div className="w-[15px] h-[15px] bg-white border border-[#bdbdbd] flex items-center justify-center"><svg width="5" height="8"><path d="M0 0v8l5-4z" fill="#555" /></svg></div>
      </div>
    </div>
  );
}

function StatusBar() {
  return (
    <div className="h-[21px] bg-[#f3f3f3] flex items-center text-[12px] text-[#555] shrink-0">
      <span className="ml-[8px] w-[42px]">Ready</span>
      <svg width="14" height="14" viewBox="0 0 14 14" className="ml-[8px]"><circle cx="3" cy="3" r="2.500" fill="#666" /><path d="M6 1h7M1 7h12v6H1zM1 10h12M5 7v6M9 7v6" fill="none" stroke="#666" /></svg>
      <div className="ml-[1008px] w-[38px] h-[21px] bg-[#c6c6c6] flex items-center justify-center">
        <svg width="14" height="14" viewBox="0 0 14 14"><path d="M.5.500h13v13H.5zM.5 5h13M.5 9.500h13M5 .5v13M9.500.5v13" fill="none" stroke="#666" /></svg>
      </div>
      <svg width="14" height="14" viewBox="0 0 14 14" className="ml-[12px]"><path d="M.5.500h13v13H.5zM3.500 3.500h7v7h-7zM5 5.500h4M5 7.500h4" fill="none" stroke="#666" /></svg>
      <svg width="14" height="14" viewBox="0 0 14 14" className="ml-[24px]"><path d="M.5.500h13v13H.5zM7 .5v7M.5 7.500H7" fill="none" stroke="#666" /></svg>
      <div className="w-[6px] h-[2px] bg-[#666] ml-[18px]" />
      <div className="ml-[3px] w-[100px] h-px bg-[#aaa] flex items-center pl-[47px]"><div className="w-[5px] h-[11px] bg-[#666] shrink-0" /></div>
      <svg width="7" height="7" viewBox="0 0 7 7" className="ml-[3px]"><path d="M0 2.500h7v2H0zM2.500 0h2v7h-2z" fill="#666" /></svg>
      <span className="ml-[12px]">100%</span>
    </div>
  );
}

function Taskbar() {
  return (
    <div className="h-[40px] flex text-white bg-[linear-gradient(90deg,#2f2a25_30%,#3b332b_55%,#2c2723_80%,#1f1d1b)] shrink-0">
      <div className="w-[48px] h-full bg-[#1c1c1c] flex items-center justify-center">
        <svg width="16" height="16" viewBox="0 0 16 16"><path d="M0 2.300l6.500-.9v6.200H0zM7.300 1.300L16 0v7.600H7.300zM0 8.400h6.500v6.200L0 13.700zM7.300 8.400H16V16l-8.700-1.300z" fill="#fff" /></svg>
      </div>
      <div className="w-[344px] h-full bg-[#f2f2f2] border-t border-[#cfcfcf] flex items-center text-[#444] text-[15px]">
        <svg width="17" height="17" viewBox="0 0 17 17" className="ml-[12px]"><circle cx="10.500" cy="6.500" r="5" fill="none" stroke="#333" strokeWidth="1.200" /><path d="M7 10.500l-6 6" stroke="#333" strokeWidth="1.200" /></svg>
        <span className="ml-[11px]">Type here to search</span>
      </div>
      <Slot className="w-[51px] ml-[2px]"><Chrome /></Slot>
      <Slot className="w-[47px]">
        <svg width="22" height="22" viewBox="0 0 22 22"><rect width="22" height="22" rx="3" fill="#eceae6" /><path d="M17 8H7l3-3M5 14h10l-3 3" fill="none" stroke="#5c7b73" strokeWidth="2.500" /></svg>
      </Slot>
      <Slot className="w-[48px]" bar="bg-[#76b9ed]">
        <svg width="23" height="20" viewBox="0 0 23 20"><path d="M0 2h9l2 2h12v3H0z" fill="#d9a72f" /><path d="M0 6h23v13a1 1 0 0 1-1 1H1a1 1 0 0 1-1-1z" fill="#f5d46d" /><rect x="7" y="12" width="9" height="5" fill="#3d92d8" /><rect x="5" y="16" width="13" height="4" fill="#2d7fc4" /></svg>
      </Slot>
      <Slot className="w-[47px]" bar="bg-[#76b9ed]">
        <svg width="24" height="22" viewBox="0 0 24 22"><rect x="10" y="5" width="14" height="12" fill="#1f78c8" /><path d="M11 6l6 5 6-5z" fill="#fff" /><path d="M10 8l7 5 7-5v8H10z" fill="#fff" /><path d="M0 2.500L13 0v22L0 19.500z" fill="#0f62b4" /><circle cx="6.500" cy="11" r="3.200" fill="none" stroke="#fff" strokeWidth="1.800" /></svg>
      </Slot>
      <Slot className="w-[52px] bg-[#b06b30]" bar="bg-[#e87f1e]">
        <svg width="22" height="22" viewBox="0 0 22 22"><rect width="22" height="22" rx="1.500" fill="#fcd116" /><path d="M22 11v11H11z" fill="#333" /></svg>
      </Slot>
      <Slot className="w-[46px]" bar="bg-[#76b9ed]"><Chrome /></Slot>
      <div className="w-[4px]" />
      <Slot className="w-[48px] bg-[#5d534d]" bar="bg-[#76b9ed]">
        <svg width="22" height="22" viewBox="0 0 22 22"><rect x="8" y="2" width="14" height="18" fill="#fff" stroke="#1d6f42" /><path d="M8 7h14M8 11h14M8 15h14M15 2v18" stroke="#1d6f42" /><path d="M0 2.500L13 0v22L0 19.500z" fill="#1d6f42" /><path d="M3.500 7l5 8M8.500 7l-5 8" stroke="#fff" strokeWidth="1.500" /></svg>
      </Slot>
      <div className="flex items-center text-[12px] whitespace-nowrap">
        <svg width="12" height="7" viewBox="0 0 12 7" className="ml-[356px]"><path d="M.5 6.500L6 1l5.500 5.500" fill="none" stroke="#fff" /></svg>
        <svg width="17" height="11" viewBox="0 0 17 11" className="ml-[9px]"><path d="M3 11a3 3 0 0 1 0-6 5 5 0 0 1 9-1 3.500 3.500 0 0 1 2 7z" fill="#2d8fdc" /></svg>
        <svg width="16" height="12" viewBox="0 0 16 12" className="ml-[8px]"><rect x="5" y="2.500" width="10" height="8" fill="none" stroke="#fff" /><rect x="7" y="4.500" width="6" height="4" fill="#fff" /><path d="M0 4h3M2 0v3M4 0v3M1 3h4v3H1zM3 6v4" stroke="#fff" fill="none" /></svg>
        <svg width="16" height="14" viewBox="0 0 16 14" className="ml-[7px]"><path d="M4.500.5h11v8h-11zM.5 3.500h6v5h-6zM9 9v3M6 12.500h7" fill="none" stroke="#fff" /></svg>
        <svg width="17" height="14" viewBox="0 0 17 14" className="ml-[8px]"><path d="M1 4.500h2.500L7.500 1v12l-4-3.500H1zM10 4.500a3 3 0 0 1 0 5M12.500 2.500a6 6 0 0 1 0 9" fill="none" stroke="#fff" /></svg>
        <span className="ml-[10px] w-[30px]">ENG</span>
      </div>
      <div className="ml-[1px] w-[68px] flex flex-col items-center justify-center text-[12px] leading-[19px]">
        <span>3:50 PM</span><span>13/04/2022</span>
      </div>
      <div className="relative ml-[13px] h-full flex items-center">
        <svg width="16" height="15" viewBox="0 0 16 15" className="mb-[8px]"><path d="M0 0h16v11H5l-3 3v-3H0z" fill="#fff" /><path d="M3 3h10M3 5.500h10M3 8h10" stroke="#555" /></svg>
        <span className="absolute left-[7px] top-[19px] w-[16px] h-[16px] rounded-full bg-[#333] border border-[#aaa] text-[11px] font-bold leading-[14px] text-center">2</span>
      </div>
    </div>
  );
}

export default function App() {
  return (
    <div className="relative w-[1366px] h-[768px] overflow-hidden flex flex-col bg-white font-[Roboto,sans-serif]">
      <div className="bg-[#217346]">
        <svg width="500" height="52" viewBox="0 0 500 52" className="absolute top-0 right-0">
          <path d="M177 52V34L120 34C60 34 50 20 0 0H500V52Z" fill="#1f6a40" />
          <circle cx="150" cy="22" r="30" fill="#1d633b" /><circle cx="290" cy="20" r="24" fill="#216e43" />
          <circle cx="460" cy="40" r="22" fill="#1d633b" />
        </svg>
        <TitleBar />
        <TabRow />
      </div>
      <Ribbon />
      <FormulaBar />
      <div className="flex bg-[#e6e6e6] h-[438px] shrink-0">
        <div className="w-[1344px] shrink-0">
          <Outline />
          <Sheet />
        </div>
        <VScroll />
      </div>
      <SheetTabs />
      <StatusBar />
      <Taskbar />
    </div>
  );
}
